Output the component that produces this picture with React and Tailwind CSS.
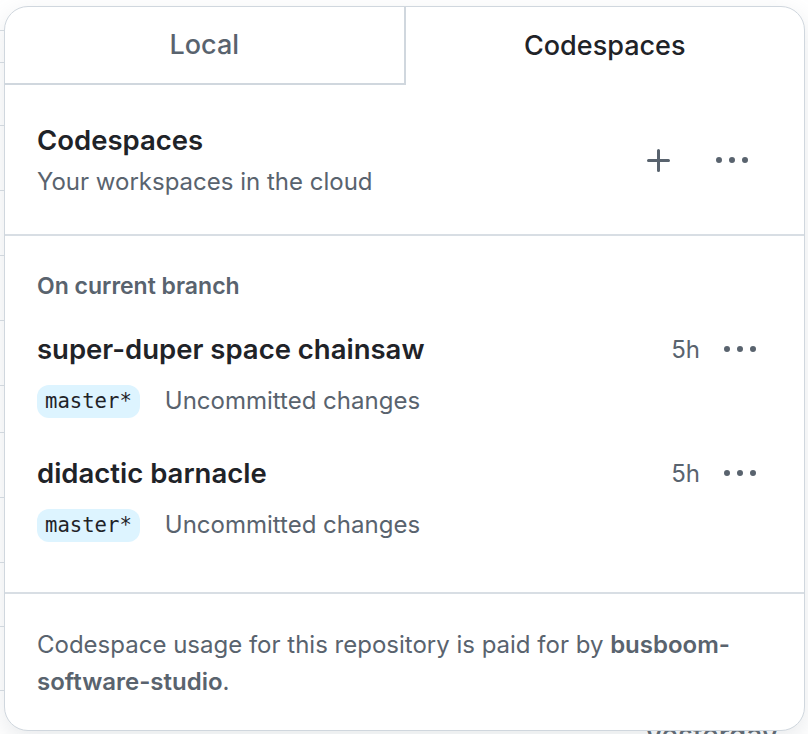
const KebabIcon = ({ className = '' }) => (
  <svg viewBox="0 0 16 16" width="32" height="32" fill="currentColor" className={className}>
    <path d="M8 9a1.5 1.5 0 1 0 0-3 1.5 1.5 0 0 0 0 3ZM1.5 9a1.5 1.5 0 1 0 0-3 1.5 1.5 0 0 0 0 3Zm13 0a1.5 1.5 0 1 0 0-3 1.5 1.5 0 0 0 0 3Z" />
  </svg>
);

const PlusIcon = ({ className = '' }) => (
  <svg viewBox="0 0 16 16" width="32" height="32" fill="currentColor" className={className}>
    <path d="M7.75 2a.75.75 0 0 1 .75.75V7h4.25a.75.75 0 0 1 0 1.5H8.5v4.25a.75.75 0 0 1-1.5 0V8.5H2.75a.75.75 0 0 1 0-1.5H7V2.75A.75.75 0 0 1 7.75 2Z" />
  </svg>
);

const spaces = [
  { name: 'super-duper space chainsaw', age: '5h', branch: 'master*', status: 'Uncommitted changes' },
  { name: 'didactic barnacle', age: '5h', branch: 'master*', status: 'Uncommitted changes' },
];

function SpaceRow({ space }) {
  return (
    <div className="flex flex-col">
      <div className="flex h-[36px] items-center">
        <div className="flex-1 text-[27.5px] font-semibold text-[#1f2328]">{space.name}</div>
        <span className="text-[24px] text-[#59636e]">{space.age}</span>
        <button type="button" className="ml-[22px] flex h-[36px] w-[36px] items-center justify-center text-[#59636e]">
          <KebabIcon />
        </button>
      </div>
      <div className="mt-[15px] flex items-center">
        <span className="flex h-[33px] items-center rounded-[12px] bg-[#ddf4ff] px-[8px] font-['DejaVu_Sans_Mono',monospace] text-[20.6px] text-[#1f2328]">
          {space.branch}
        </span>
        <span className="ml-[25px] text-[24px] text-[#59636e]">{space.status}</span>
      </div>
    </div>
  );
}

export default function App() {
  return (
    <div className="relative h-[734px] w-[808px] overflow-hidden bg-white font-['Inter',sans-serif]">
      {/* page behind the popover */}
      {[30, 62, 125, 190, 255, 320, 385, 432, 497, 562, 626, 690].map((y) => (
        <div key={y} className="absolute left-0 h-px w-[8px] bg-[#d8dee4]" style={{ top: y }} />
      ))}
      <div className="absolute left-[646px] top-[714px] text-[28px] font-medium text-[#59636e]">yesterday</div>

      <div className="relative pl-[4px] pt-[6px]">
        <div className="flex h-[725px] w-[801px] flex-col overflow-hidden rounded-[24px] border border-[#d0d7de] bg-white shadow-[0_8px_24px_rgba(140,149,159,0.2)]">
          <div className="flex h-[78px] shrink-0">
            <button type="button" className="flex-1 border-b-2 border-r-2 border-[#d0d7de] text-[27px] font-medium text-[#59636e]">
              Local
            </button>
            <button type="button" className="flex-1 text-[27px] font-medium text-[#1f2328]">
              Codespaces
            </button>
          </div>

          <div className="flex h-[151px] shrink-0 items-center border-b-2 border-[#d8dee4] pl-[32px] pr-[24px]">
            <div className="flex-1">
              <h2 className="text-[27.5px] font-semibold leading-[36px] text-[#1f2328]">Codespaces</h2>
              <p className="mt-[9px] text-[24px] leading-[30px] text-[#59636e]">Your workspaces in the cloud</p>
            </div>
            <div className="mt-[2px] flex items-center gap-[41px] pr-[32px]">
              <button type="button" className="text-[#59636e]">
                <PlusIcon />
              </button>
              <button type="button" className="text-[#59636e]">
                <KebabIcon />
              </button>
            </div>
          </div>

          <div className="flex h-[358px] shrink-0 flex-col border-b-2 border-[#d8dee4] pl-[32px] pr-[46px] pt-[35px]">
            <div className="text-[23px] font-semibold leading-[30px] text-[#59636e]">On current branch</div>
            <div className="mt-[31px] flex flex-col gap-[37px]">
              {spaces.map((s) => (
                <SpaceRow key={s.name} space={s} />
              ))}
            </div>
          </div>

          <div className="px-[32px] pt-[32px] text-[24px] leading-[37px] text-[#59636e]">
            Codespace usage for this repository is paid for by <span className="font-semibold">busboom-software-studio</span>.
          </div>
        </div>
      </div>
    </div>
  );
}
